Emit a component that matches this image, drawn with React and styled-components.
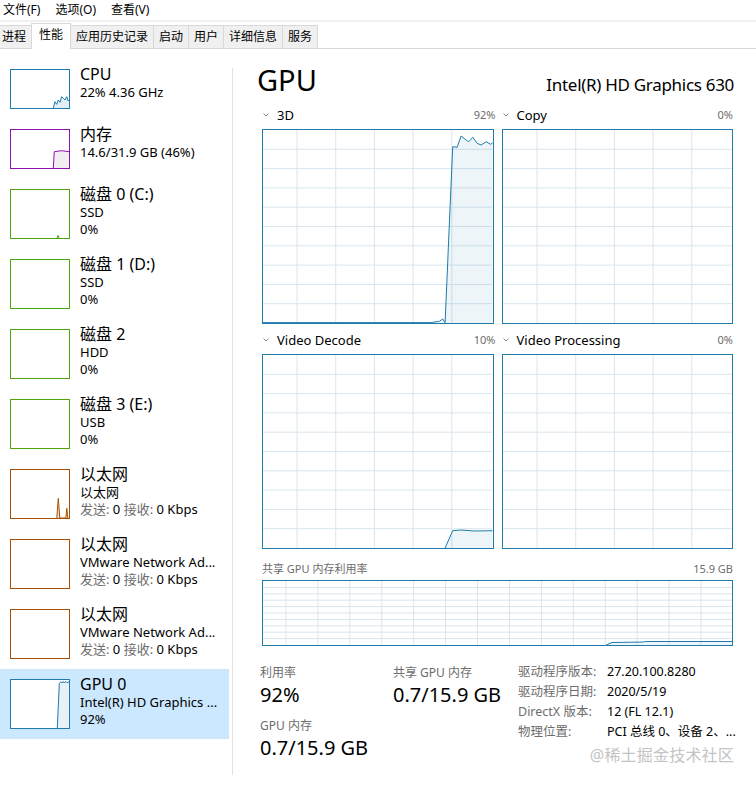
import React from "react";
import styled, { createGlobalStyle, css } from "styled-components";

const FONT = `"Noto Sans", "Noto Sans CJK SC", sans-serif`;

const Global = createGlobalStyle`
  html, body { margin: 0; padding: 0; background: #fff; }
  body { font-family: ${FONT}; color: #000; }
  * { box-sizing: border-box; }
`;

const Window = styled.div`
  position: relative;
  width: 756px;
  height: 785px;
  overflow: hidden;
  background: #fff;
  display: flex;
  flex-direction: column;
`;

const MenuBar = styled.div`
  height: 22px;
  display: flex;
  gap: 15px;
  padding: 0 0 0 3px;
  border-bottom: 2px solid #f0f0f0;
  font-size: 12px;
  line-height: 20px;
`;

const MenuItem = styled.span``;

const TabStrip = styled.div`
  height: 27px;
  display: flex;
  align-items: flex-end;
  border-bottom: 1px solid #d9d9d9;
  overflow: visible;
`;

const Tab = styled.div`
  height: 23px;
  padding: 0 5px;
  margin-right: -1px;
  background: #f0f0f0;
  border: 1px solid #d9d9d9;
  border-bottom: none;
  font-size: 12px;
  line-height: 21px;
  white-space: nowrap;
  &:first-child { margin-left: -4px; }
  ${(p) =>
    p.$active &&
    css`
      position: relative;
      z-index: 1;
      height: 26px;
      margin-bottom: -1px;
      padding: 0 7px;
      background: #fff;
      line-height: 22px;
    `}
`;

const Body = styled.div`
  flex: 1;
  display: flex;
  min-height: 0;
`;

const Sidebar = styled.div`
  flex: none;
  width: 229px;
  padding-top: 10px;
  display: flex;
  flex-direction: column;
`;

const Splitter = styled.div`
  flex: none;
  width: 1px;
  margin: 19px 0 10px 3px;
  background: #e3e3e3;
`;

const Item = styled.div`
  display: flex;
  align-items: flex-start;
  gap: 10px;
  padding: 10px 0 10px 10px;
  background: ${(p) => (p.$selected ? "#cce8ff" : "transparent")};
`;

const Thumb = styled.div`
  width: 60px;
  height: ${(p) => (p.$tall ? 50 : 40)}px;
  border: 1px solid ${(p) => p.$color};
  background: #fff;
  flex: none;
  svg { display: block; width: 100%; height: 100%; }
`;

const Info = styled.div`
  margin-top: -5px;
  min-width: 0;
  white-space: nowrap;
`;

const Title = styled.div`
  font-size: 16px;
  line-height: 20px;
`;

const Sub = styled.div`
  font-size: 13px;
  line-height: 17px;
`;

const Gray = styled.span`
  color: #6d6d6d;
`;

const Main = styled.div`
  position: relative;
  flex: 1;
  min-width: 0;
  padding: 13px 23px 0 29px;
  display: flex;
  flex-direction: column;
`;

const Header = styled.div`
  display: flex;
  justify-content: space-between;
  align-items: baseline;
  margin-left: -5px;
  margin-right: -1px;
`;

const BigTitle = styled.div`
  font-size: 29px;
  line-height: 36px;
`;

const Model = styled.div`
  font-size: 17px;
  line-height: 24px;
  letter-spacing: -0.3px;
`;

const ChartGrid = styled.div`
  margin-top: 6px;
  display: grid;
  grid-template-columns: 1fr 1fr;
  column-gap: 8px;
  row-gap: 5px;
`;

const Cell = styled.div`
  display: flex;
  flex-direction: column;
`;

const ChartHead = styled.div`
  height: 22px;
  margin-bottom: 3px;
  padding-top: 2px;
  display: flex;
  align-items: flex-start;
  justify-content: space-between;
  line-height: 18px;
  white-space: nowrap;
`;

const HeadLabel = styled.span`
  display: flex;
  align-items: center;
  gap: 8px;
  font-size: 13px;
  line-height: 18px;
  padding-left: 1px;
  svg { display: block; }
`;

const HeadValue = styled.span`
  font-size: 11px;
  line-height: 18px;
  color: #6d6d6d;
  margin-right: ${(p) => (p.$over ? -2 : 0)}px;
`;

const ChartBox = styled.div`
  height: ${(p) => p.$h}px;
  border: 1px solid #1e7bab;
  background: #fff;
  svg { display: block; width: 100%; height: 100%; }
`;

const SharedHead = styled.div`
  margin-top: 11px;
  margin-bottom: 2px;
  height: 18px;
  display: flex;
  justify-content: space-between;
  font-size: 11px;
  line-height: 18px;
  color: #6d6d6d;
`;

const Stats = styled.div`
  margin-top: 18px;
  margin-left: -2px;
  display: grid;
  grid-template-columns: 133px 125px 1fr;
  align-items: start;
`;

const StatCol = styled.div`
  display: flex;
  flex-direction: column;
`;

const StatLabel = styled.div`
  font-size: 12px;
  line-height: 18px;
  color: #6d6d6d;
  margin-top: ${(p) => p.$mt || 0}px;
  white-space: nowrap;
`;

const StatValue = styled.div`
  font-size: 20px;
  line-height: 26px;
  white-space: nowrap;
`;

const InfoGrid = styled.div`
  margin-top: -2px;
  display: grid;
  grid-template-columns: 89px 1fr;
  font-size: 12.5px;
  line-height: 20px;
  white-space: nowrap;
`;

const InfoKey = styled.span`
  color: #6d6d6d;
`;

const InfoVal = styled.span``;

const Watermark = styled.div`
  position: absolute;
  right: 22px;
  bottom: 20px;
  font-size: 16px;
  line-height: 20px;
  color: #c4c4c4;
  letter-spacing: 0.2px;
`;

/* ---------- drawings ---------- */

const Chevron = () => (
  <svg width="6" height="4" viewBox="0 0 6 4">
    <path d="M0.5 0.5 L3 3 L5.5 0.5" fill="none" stroke="#7a7a7a" strokeWidth="0.9" />
  </svg>
);

const GRID = "#d9e5ee";

function Graph({ w, h, vStart, vStep, vCount, hCount, points, color = "#1e7bab", fill = "rgba(30,123,171,0.08)" }) {
  const hLines = [];
  for (let i = 1; i < hCount; i++) hLines.push((h * i) / hCount);
  const vLines = [];
  for (let k = 0; k < vCount; k++) vLines.push(vStart + vStep * k);
  let area = null;
  let line = null;
  if (points && points.length) {
    const pts = points.map((p) => p.join(",")).join(" ");
    line = pts;
    area = `${points[0][0]},${h} ${pts} ${points[points.length - 1][0]},${h}`;
  }
  return (
    <svg viewBox={`0 0 ${w} ${h}`} preserveAspectRatio="none">
      {hLines.map((y) => (
        <line key={"h" + y} x1="0" x2={w} y1={y} y2={y} stroke={GRID} strokeWidth="1" vectorEffect="non-scaling-stroke" />
      ))}
      {vLines.map((x) => (
        <line key={"v" + x} x1={x} x2={x} y1="0" y2={h} stroke={GRID} strokeWidth="1" vectorEffect="non-scaling-stroke" />
      ))}
      {area && <polygon points={area} fill={fill} stroke="none" />}
      {line && (
        <polyline points={line} fill="none" stroke={color} strokeWidth="1" vectorEffect="non-scaling-stroke" strokeLinejoin="round" />
      )}
    </svg>
  );
}

function Spark({ h, points, color, fill }) {
  if (!points) return <svg viewBox={`0 0 58 ${h}`} />;
  const pts = points.map((p) => p.join(",")).join(" ");
  const area = `${points[0][0]},${h} ${pts} ${points[points.length - 1][0]},${h}`;
  return (
    <svg viewBox={`0 0 58 ${h}`} preserveAspectRatio="none">
      <polygon points={area} fill={fill} />
      <polyline points={pts} fill="none" stroke={color} strokeWidth="1" strokeLinejoin="round" />
    </svg>
  );
}

/* ---------- data ---------- */

const BLUE = "#1e7bab";
const PURPLE = "#8b12ae";
const GREEN = "#4da60c";
const BROWN = "#a74f01";

const items = [
  {
    title: "CPU",
    lines: ["22% 4.36 GHz"],
    color: BLUE,
    fill: "rgba(30,123,171,0.12)",
    pts: [[42.3, 38], [44, 31.7], [45.7, 34.3], [47.3, 30], [49, 32.3], [50.7, 26.7], [52.3, 28.3], [54, 30], [55.7, 26.7], [57.3, 31], [58, 30]],
  },
  {
    title: "内存",
    lines: ["14.6/31.9 GB (46%)"],
    color: PURPLE,
    fill: "#f1eff2",
    pts: [[42.3, 38], [43.3, 21.7], [50.7, 20.7], [58, 21.7]],
  },
  { title: "磁盘 0 (C:)", lines: ["SSD", "0%"], color: GREEN, fill: "rgba(77,166,12,0.2)", pts: [[46, 48], [47, 45.5], [48, 48]] },
  { title: "磁盘 1 (D:)", lines: ["SSD", "0%"], color: GREEN },
  { title: "磁盘 2", lines: ["HDD", "0%"], color: GREEN },
  { title: "磁盘 3 (E:)", lines: ["USB", "0%"], color: GREEN },
  {
    title: "以太网",
    lines: ["以太网", "net"],
    color: BROWN,
    fill: "rgba(167,79,1,0.18)",
    pts: [[45.8, 48], [47.3, 28.3], [48.8, 48], [54.8, 48], [55.8, 38.3], [56.8, 48]],
  },
  { title: "以太网", lines: ["VMware Network Ad...", "net"], color: BROWN },
  { title: "以太网", lines: ["VMware Network Ad...", "net"], color: BROWN },
  {
    title: "GPU 0",
    lines: ["Intel(R) HD Graphics ...", "92%"],
    color: BLUE,
    fill: "rgba(30,123,171,0.1)",
    selected: true,
    pts: [[46.3, 48], [48.3, 3.3], [50, 1.7], [51.2, 3], [52.3, 1.5], [53.4, 3], [54.5, 1.4], [55.7, 2.6], [58.3, 1.8]],
  },
];

const Net = () => (
  <>
    <Gray>发送:</Gray> 0 <Gray>接收:</Gray> 0 Kbps
  </>
);

const charts = [
  {
    label: "3D",
    value: "92%",
    over: true,
    pts: [[0, 192.6], [167.7, 192.6], [176, 191.3], [179.3, 189], [181.7, 192.6], [189.3, 16.7], [193.7, 17.3], [197.7, 6], [202.7, 10], [205.3, 11.7], [209.3, 7.3], [213.7, 13.3], [217.7, 15], [222.7, 11.7], [227, 14.3], [229, 13]],
  },
  { label: "Copy", value: "0%" },
  {
    label: "Video Decode",
    value: "10%",
    over: true,
    pts: [[181.7, 193], [189.3, 175.7], [197.7, 175], [211, 176], [229, 175.7]],
  },
  { label: "Video Processing", value: "0%" },
];

export default function App() {
  return (
    <Window>
      <Global />
      <MenuBar>
        <MenuItem>文件(F)</MenuItem>
        <MenuItem>选项(O)</MenuItem>
        <MenuItem>查看(V)</MenuItem>
      </MenuBar>
      <TabStrip>
        {["进程", "性能", "应用历史记录", "启动", "用户", "详细信息", "服务"].map((t) => (
          <Tab key={t} $active={t === "性能"}>
            {t}
          </Tab>
        ))}
      </TabStrip>
      <Body>
        <Sidebar>
          {items.map((it, i) => {
            const tall = it.lines.length > 1;
            return (
              <Item key={i} $selected={it.selected}>
                <Thumb $tall={tall} $color={it.color}>
                  <Spark h={tall ? 48 : 38} points={it.pts} color={it.color} fill={it.fill} />
                </Thumb>
                <Info>
                  <Title>{it.title}</Title>
                  {it.lines.map((l, j) => (
                    <Sub key={j}>{l === "net" ? <Net /> : l}</Sub>
                  ))}
                </Info>
              </Item>
            );
          })}
        </Sidebar>
        <Splitter />
        <Main>
          <Header>
            <BigTitle>GPU</BigTitle>
            <Model>Intel(R) HD Graphics 630</Model>
          </Header>
          <ChartGrid>
            {charts.map((c) => (
              <Cell key={c.label}>
                <ChartHead>
                  <HeadLabel>
                    <Chevron />
                    {c.label}
                  </HeadLabel>
                  <HeadValue $over={c.over}>{c.value}</HeadValue>
                </ChartHead>
                <ChartBox $h={195}>
                  <Graph w={229} h={193} vStart={34} vStep={38.6} vCount={5} hCount={10} points={c.pts} />
                </ChartBox>
              </Cell>
            ))}
          </ChartGrid>
          <SharedHead>
            <span>共享 GPU 内存利用率</span>
            <span>15.9 GB</span>
          </SharedHead>
          <ChartBox $h={66}>
            <Graph
              w={470}
              h={64}
              vStart={23}
              vStep={32}
              vCount={14}
              hCount={10}
              points={[[344, 64], [349.7, 61.5], [381.3, 61], [383, 60.5], [470, 60.5]]}
            />
          </ChartBox>
          <Stats>
            <StatCol>
              <StatLabel>利用率</StatLabel>
              <StatValue>92%</StatValue>
              <StatLabel $mt={9}>GPU 内存</StatLabel>
              <StatValue>0.7/15.9 GB</StatValue>
            </StatCol>
            <StatCol>
              <StatLabel>共享 GPU 内存</StatLabel>
              <StatValue>0.7/15.9 GB</StatValue>
            </StatCol>
            <InfoGrid>
              <InfoKey>驱动程序版本:</InfoKey>
              <InfoVal>27.20.100.8280</InfoVal>
              <InfoKey>驱动程序日期:</InfoKey>
              <InfoVal>2020/5/19</InfoVal>
              <InfoKey>DirectX 版本:</InfoKey>
              <InfoVal>12 (FL 12.1)</InfoVal>
              <InfoKey>物理位置:</InfoKey>
              <InfoVal>PCI 总线 0、设备 2、...</InfoVal>
            </InfoGrid>
          </Stats>
          <Watermark>@稀土掘金技术社区</Watermark>
        </Main>
      </Body>
    </Window>
  );
}
